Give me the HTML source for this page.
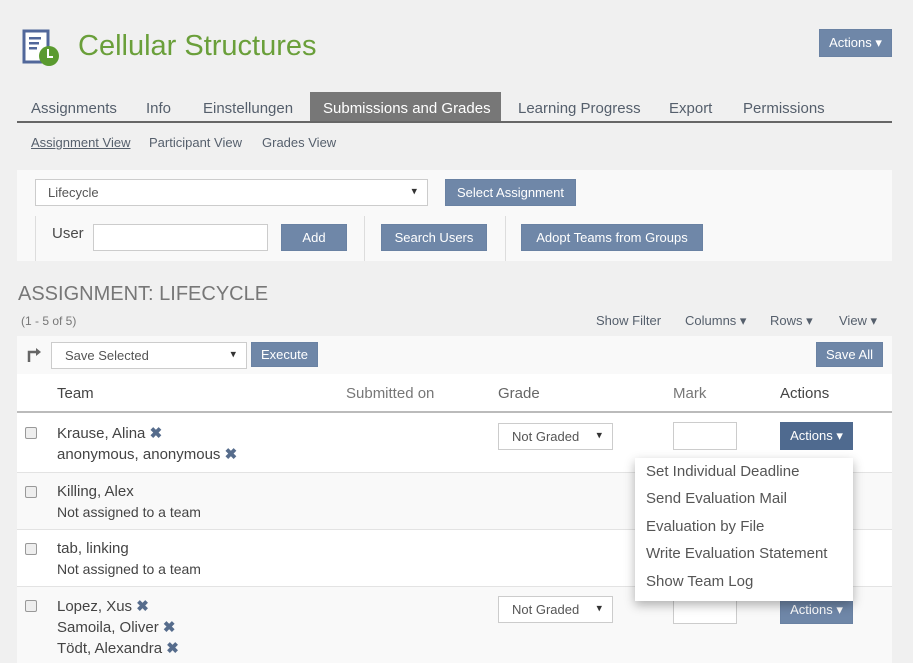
<!DOCTYPE html>
<html><head><style>
*{box-sizing:border-box;margin:0;padding:0}
body{width:913px;height:663px;overflow:hidden;background:#f0f0f0;font-family:"Liberation Sans",sans-serif;color:#4a4a4a;position:relative}
.a{position:absolute;white-space:nowrap}
.btn{position:absolute;background:#6f87a8;color:#fff;font-size:13px;text-align:center;border:1px solid #6a82a3}
.sel{position:absolute;background:#fff;border:1px solid #ccc;font-size:13px;color:#555}
.sel:after{content:"▾";position:absolute;right:10px;top:50%;transform:translateY(-55%);font-size:11px;color:#333}
.tab{position:absolute;top:100px;font-size:15px;color:#555f6c}
.sub{position:absolute;top:135px;font-size:13px;color:#555f6c}
.cb{position:absolute;left:25px;width:12px;height:12px;border:1px solid #999;border-radius:2px;background:#eee}
.t{position:absolute;font-size:15px;color:#444}
.x{color:#566c8c;font-weight:bold;font-size:15px}
.mi{position:absolute;left:11px;font-size:15px;color:#555}
</style></head><body>
<svg class="a" style="left:22px;top:29px" width="40" height="40" viewBox="0 0 40 40">
<rect x="2" y="2" width="24" height="31" fill="#fff" stroke="#51679a" stroke-width="3"/>
<rect x="7" y="8" width="12" height="2.5" fill="#51679a"/><rect x="7" y="13" width="10" height="2.5" fill="#51679a"/><rect x="7" y="18" width="8" height="2.5" fill="#51679a"/>
<circle cx="27" cy="27" r="10" fill="#5a9a2f"/><path d="M26 20v8h5" stroke="#fff" stroke-width="2" fill="none"/></svg>
<div class="a" style="left:78px;top:30px;font-size:29px;color:#6a9f3a">Cellular Structures</div>
<div class="btn" style="left:819px;top:29px;width:73px;height:28px;line-height:26px">Actions ▾</div>
<div class="a" style="left:310px;top:92px;width:191px;height:30px;background:#777"></div>
<div class="tab" style="left:31px">Assignments</div>
<div class="tab" style="left:146px">Info</div>
<div class="tab" style="left:203px">Einstellungen</div>
<div class="tab" style="left:323px;color:#fff">Submissions and Grades</div>
<div class="tab" style="left:518px">Learning Progress</div>
<div class="tab" style="left:669px">Export</div>
<div class="tab" style="left:743px">Permissions</div>
<div class="a" style="left:17px;top:121px;width:875px;height:2px;background:#666"></div>
<div class="sub" style="left:31px;text-decoration:underline">Assignment View</div>
<div class="sub" style="left:149px">Participant View</div>
<div class="sub" style="left:262px">Grades View</div>
<div class="a" style="left:17px;top:170px;width:875px;height:91px;background:#f9f9f9"></div>
<div class="sel" style="left:35px;top:179px;width:393px;height:27px;line-height:25px;padding-left:12px">Lifecycle</div>
<div class="btn" style="left:445px;top:179px;width:131px;height:27px;line-height:25px">Select Assignment</div>
<div class="a" style="left:35px;top:216px;width:1px;height:45px;background:#ddd"></div>
<div class="a" style="left:52px;top:225px;font-size:15px">User</div>
<div class="a" style="left:93px;top:224px;width:175px;height:27px;background:#fff;border:1px solid #ccc"></div>
<div class="btn" style="left:281px;top:224px;width:66px;height:27px;line-height:25px">Add</div>
<div class="a" style="left:364px;top:216px;width:1px;height:45px;background:#ddd"></div>
<div class="btn" style="left:381px;top:224px;width:106px;height:27px;line-height:25px">Search Users</div>
<div class="a" style="left:505px;top:216px;width:1px;height:45px;background:#ddd"></div>
<div class="btn" style="left:521px;top:224px;width:182px;height:27px;line-height:25px">Adopt Teams from Groups</div>
<div class="a" style="left:18px;top:283px;font-size:20px;color:#777">ASSIGNMENT: LIFECYCLE</div>
<div class="a" style="left:21px;top:314px;font-size:12px;color:#777">(1 - 5 of 5)</div>
<div class="a" style="left:596px;top:313px;font-size:13px;color:#555f6c">Show Filter</div>
<div class="a" style="left:685px;top:313px;font-size:13px;color:#555f6c">Columns ▾</div>
<div class="a" style="left:770px;top:313px;font-size:13px;color:#555f6c">Rows ▾</div>
<div class="a" style="left:839px;top:313px;font-size:13px;color:#555f6c">View ▾</div>
<div class="a" style="left:17px;top:336px;width:875px;height:38px;background:#f9f9f9"></div>
<svg class="a" style="left:27px;top:346px" width="14" height="16"><path d="M2 16V6h8" stroke="#666" stroke-width="2.5" fill="none"/><path d="M9 2l5 4-5 4z" fill="#666"/></svg>
<div class="sel" style="left:51px;top:342px;width:196px;height:27px;line-height:25px;padding-left:13px">Save Selected</div>
<div class="btn" style="left:251px;top:342px;width:67px;height:25px;line-height:23px">Execute</div>
<div class="btn" style="left:816px;top:342px;width:67px;height:25px;line-height:23px">Save All</div>
<div class="a" style="left:17px;top:374px;width:875px;height:39px;background:#fff;border-bottom:2px solid #bbb"></div>
<div class="t" style="left:57px;top:385px">Team</div>
<div class="t" style="left:346px;top:385px;color:#777">Submitted on</div>
<div class="t" style="left:498px;top:385px;color:#666">Grade</div>
<div class="t" style="left:673px;top:385px;color:#777">Mark</div>
<div class="t" style="left:780px;top:385px">Actions</div>
<div class="a" style="left:17px;top:413px;width:875px;height:60px;background:#fff;border-bottom:1px solid #e3e3e3"></div>
<div class="a" style="left:17px;top:473px;width:875px;height:57px;background:#f9f9f9;border-bottom:1px solid #e3e3e3"></div>
<div class="a" style="left:17px;top:530px;width:875px;height:57px;background:#fff;border-bottom:1px solid #e3e3e3"></div>
<div class="a" style="left:17px;top:587px;width:875px;height:76px;background:#f9f9f9"></div>
<div class="cb" style="top:427px"></div>
<div class="t" style="left:57px;top:424px">Krause, Alina <span class="x">✖</span></div>
<div class="t" style="left:57px;top:445px">anonymous, anonymous <span class="x">✖</span></div>
<div class="sel" style="left:498px;top:423px;width:115px;height:27px;line-height:25px;padding-left:13px">Not Graded</div>
<div class="a" style="left:673px;top:422px;width:64px;height:28px;background:#fff;border:1px solid #ccc"></div>
<div class="btn" style="left:780px;top:422px;width:73px;height:28px;line-height:26px;background:#4f6a8f;border-color:#4f6a8f">Actions ▾</div>
<div class="cb" style="top:486px"></div>
<div class="t" style="left:57px;top:483px">Killing, Alex</div>
<div class="t" style="left:57px;top:504px;font-size:14px">Not assigned to a team</div>
<div class="cb" style="top:543px"></div>
<div class="t" style="left:57px;top:540px">tab, linking</div>
<div class="t" style="left:57px;top:561px;font-size:14px">Not assigned to a team</div>
<div class="cb" style="top:600px"></div>
<div class="t" style="left:57px;top:597px">Lopez, Xus <span class="x">✖</span></div>
<div class="t" style="left:57px;top:618px">Samoila, Oliver <span class="x">✖</span></div>
<div class="t" style="left:57px;top:639px">Tödt, Alexandra <span class="x">✖</span></div>
<div class="sel" style="left:498px;top:596px;width:115px;height:27px;line-height:25px;padding-left:13px">Not Graded</div>
<div class="a" style="left:673px;top:596px;width:64px;height:28px;background:#fff;border:1px solid #ccc"></div>
<div class="btn" style="left:780px;top:596px;width:73px;height:28px;line-height:26px;background:#6f87a8">Actions ▾</div>
<div class="a" style="left:635px;top:458px;width:218px;height:143px;background:#fff;box-shadow:0 4px 10px rgba(0,0,0,.3)">
<div class="mi" style="top:5px">Set Individual Deadline</div>
<div class="mi" style="top:32px">Send Evaluation Mail</div>
<div class="mi" style="top:60px">Evaluation by File</div>
<div class="mi" style="top:87px">Write Evaluation Statement</div>
<div class="mi" style="top:115px">Show Team Log</div>
</div>
</body></html>
